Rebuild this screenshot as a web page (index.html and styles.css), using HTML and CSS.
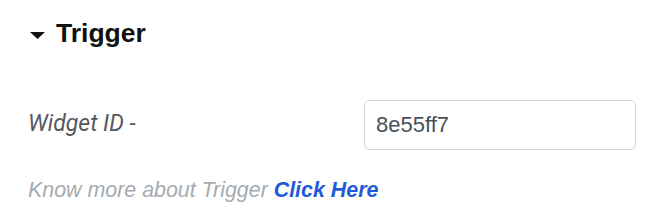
FILE: index.html
```html
<!DOCTYPE html>
<html>
    <head>
        <title>Trigger</title>
        <link rel="stylesheet" href="styles.css">
    </head>
    <body>
        <div class="panel">
            <div class="panel-title">
                <svg class="caret" width="15" height="7" viewBox="0 0 15 7"><polygon points="0,0 15,0 7.5,7" fill="#111"/></svg>
                <span>Trigger</span>
            </div>
            <div class="field">
                <label class="field-label" for="widget-id">Widget ID -</label>
                <input class="field-input" id="widget-id" type="text" value="8e55ff7">
            </div>
            <p class="help">Know more about Trigger <a href="#">Click Here</a></p>
        </div>
    </body>
</html>
```

FILE: styles.css
```css
body{
    margin: 0;
    background: #fff;
}
.panel{
    padding: 18px 0 0 28px;
}
.panel-title{
    display: flex;
    align-items: center;
    height: 30px;
    font-family: "Liberation Sans", Arial, sans-serif;
    font-weight: bold;
    font-size: 26.5px;
    line-height: 30px;
    color: #111;
}
.caret{
    margin: 4px 11px 0 2px;
}
.field{
    display: flex;
    align-items: center;
    margin-top: 52px;
}
.field-label{
    width: 336px;
    font-family: Roboto, sans-serif;
    font-style: italic;
    font-size: 23px;
    color: #55595d;
    margin-top: -4px;
}
.field-input{
    box-sizing: border-box;
    width: 272px;
    height: 50px;
    padding: 0 11px;
    border: 1px solid #d3d6d9;
    border-radius: 5px;
    font-family: "Liberation Sans", Arial, sans-serif;
    font-size: 22px;
    color: #495057;
    outline: none;
}
.help{
    margin: 28px 0 0;
    font-family: "Liberation Sans", Arial, sans-serif;
    font-style: italic;
    font-size: 21.4px;
    line-height: 24px;
    color: #a5abb1;
}
.help a{
    color: #1f5bd8;
    font-weight: bold;
    text-decoration: none;
}
```
